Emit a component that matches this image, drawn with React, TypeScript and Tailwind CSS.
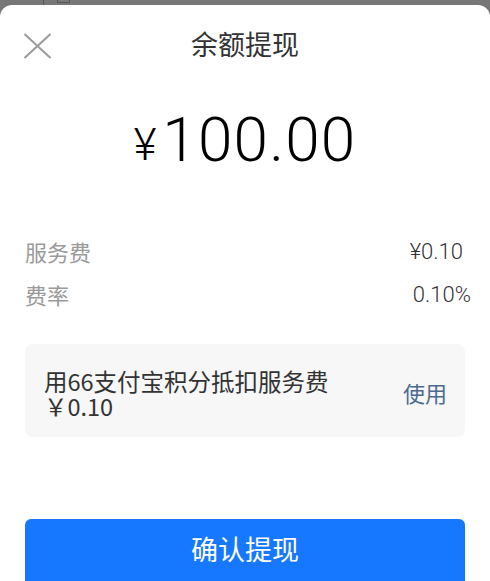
import React from "react";

const cjk = "font-['PingFang_SC','Noto_Sans_CJK_SC',sans-serif]";

export default function App() {
  return (
    <div className="w-[490px] h-[581px] overflow-hidden bg-[#777777] flex flex-col">
      {/* dimmed page behind the sheet */}
      <div className="h-[5px] shrink-0 relative">
        <div className="absolute left-[43px] top-0 w-px h-[5px] bg-[#555]" />
        <div className="absolute left-[57px] top-0 w-[13px] h-[3px] border-x border-b border-[#555]" />
      </div>

      <div className={`flex-1 bg-white rounded-t-[12px] flex flex-col ${cjk}`}>
        <div className="relative h-[80px] flex items-center justify-center">
          <button className="absolute left-[22px] top-[27px] w-[30px] h-[28px] flex items-center justify-center">
            <svg width="29" height="26" viewBox="0 0 29 26" fill="none" stroke="#9a9a9a" strokeWidth="2">
              <path d="M1.5 1 L27.5 25 M27.5 1 L1.5 25" />
            </svg>
          </button>
          <span className="text-[27px] text-[#333] leading-none mt-[-4px]">余额提现</span>
        </div>

        <div className="h-[86px] flex items-end justify-center font-['Roboto',sans-serif] font-light text-black">
          <span className="text-[44px] leading-none mr-[6px] mb-[4px]">¥</span>
          <span className="text-[62px] leading-none tracking-[1.2px]">100.00</span>
        </div>

        <div className="px-[25px] text-[22px] mt-[59px]">
          <div className="flex justify-between items-center h-[43px]">
            <span className="text-[#9a9a9a]">服务费</span>
            <span className="text-[#333] font-['Roboto',sans-serif] font-light mr-[2px]">¥0.10</span>
          </div>
          <div className="flex justify-between items-center h-[43px]">
            <span className="text-[#9a9a9a]">费率</span>
            <span className="text-[#333] font-['Roboto',sans-serif] font-light mr-[-6px]">0.10%</span>
          </div>

          <div className="mt-[28px] h-[93px] bg-[#f7f7f8] rounded-[8px] flex items-center justify-between pl-[19px] pr-[18px]">
            <div className="flex flex-col text-[#333] text-[23.5px] leading-[25px] mt-[6px]">
              <span>用66支付宝积分抵扣服务费</span>
              <span>￥0.10</span>
            </div>
            <span className="text-[#4d6a91] text-[22px] mt-[4px]">使用</span>
          </div>

          <button className="mt-[82px] w-full h-[70px] bg-[#1677ff] rounded-[6px] text-white text-[27px] flex justify-center pt-[16px] leading-none">
            确认提现
          </button>
        </div>
      </div>
    </div>
  );
}
